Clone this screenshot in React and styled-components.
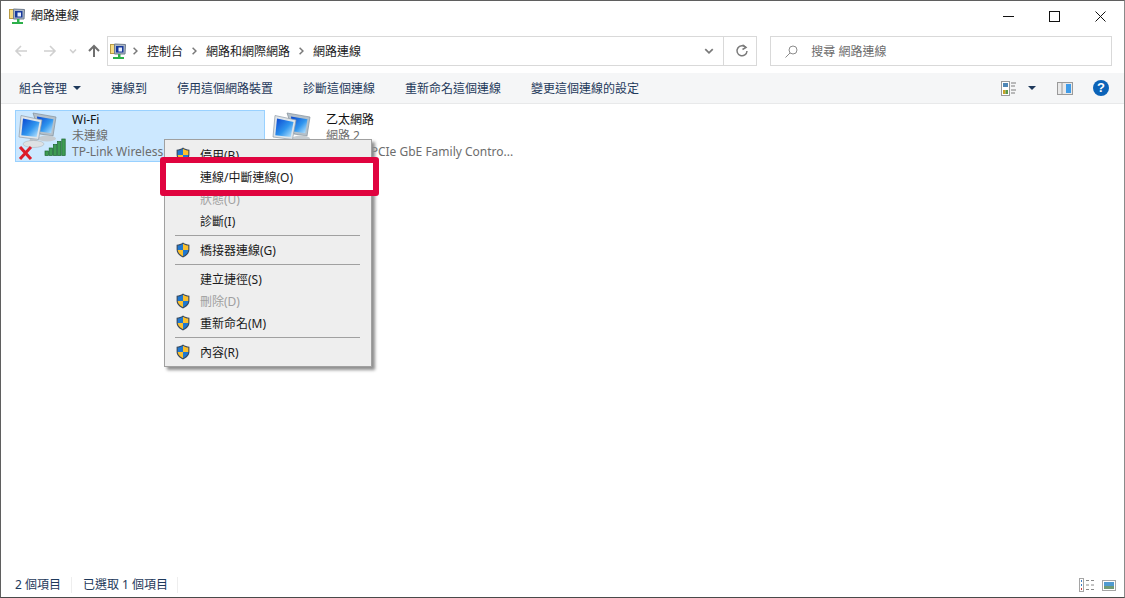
import React from "react";
import styled, { createGlobalStyle } from "styled-components";

const GlobalStyle = createGlobalStyle`
  html, body {
    margin: 0;
    padding: 0;
    background: #fff;
    overflow: hidden;
  }
  * {
    box-sizing: border-box;
  }
`;

const Window = styled.div`
  width: 1125px;
  height: 598px;
  display: flex;
  flex-direction: column;
  background: #fff;
  border: 1px solid #5f5f5f;
  border-right-color: #8a8a8a;
  border-bottom-color: #4a4a4a;
  font-family: "Noto Sans", "Noto Sans CJK TC", sans-serif;
  font-size: 12px;
  color: #1a1a1a;
`;

const TitleBar = styled.div`
  height: 30px;
  display: flex;
  align-items: center;
  padding-left: 8px;
  gap: 5px;
  flex-shrink: 0;
`;

const TitleText = styled.span`
  flex: 1;
  line-height: 16px;
`;

const WinControls = styled.div`
  display: flex;
  align-items: center;
  height: 30px;
  padding-right: 1px;
`;

const WinButton = styled.div`
  width: 46px;
  height: 30px;
  display: flex;
  align-items: center;
  justify-content: center;
`;

const NavRow = styled.div`
  height: 42px;
  display: flex;
  align-items: flex-start;
  padding: 5px 12px 0 0;
  flex-shrink: 0;
`;

const NavArrows = styled.div`
  width: 106px;
  height: 30px;
  padding-left: 13px;
  display: flex;
  align-items: center;
`;

const NavSlot = styled.div`
  width: ${(p) => p.$w}px;
  display: flex;
  align-items: center;
`;

const AddressBox = styled.div`
  width: 651px;
  height: 30px;
  display: flex;
  align-items: center;
  border: 1px solid #d9d9d9;
  padding-left: 2px;
`;

const Crumbs = styled.div`
  flex: 1;
  display: flex;
  align-items: center;
  gap: 9px;
  color: #1a1a1a;
`;

const CrumbIcon = styled.div`
  display: flex;
  margin-right: -3px;
`;

const AddressBtn = styled.div`
  width: ${(p) => p.$w}px;
  height: 28px;
  padding-left: ${(p) => p.$pl || 0}px;
  display: flex;
  align-items: center;
  justify-content: center;
  border-left: ${(p) => (p.$divided ? "1px solid #d9d9d9" : "none")};
`;

const SearchBox = styled.div`
  width: 342px;
  height: 30px;
  margin-left: 13px;
  border: 1px solid #d9d9d9;
  display: flex;
  align-items: center;
  padding-left: 14px;
  gap: 13px;
  color: #6d6d6d;
`;

const Toolbar = styled.div`
  height: 31px;
  background: #f5f6f7;
  border-bottom: 1px solid #e8e9ea;
  display: flex;
  align-items: center;
  padding-left: 18px;
  gap: 30px;
  color: #1e395b;
  flex-shrink: 0;
`;

const ToolItem = styled.div`
  display: flex;
  align-items: center;
  gap: 6px;
  white-space: nowrap;
`;

const ToolRight = styled.div`
  margin-left: auto;
  display: flex;
  align-items: center;
  padding-right: 15px;
`;

const ToolIcon = styled.div`
  display: flex;
  align-items: center;
  margin-left: ${(p) => p.$ml || 0}px;
`;

const Caret = styled.span`
  width: 0;
  height: 0;
  border-left: 4px solid transparent;
  border-right: 4px solid transparent;
  border-top: 4px solid #1e395b;
`;

const HelpBadge = styled.div`
  width: 16px;
  height: 16px;
  border-radius: 50%;
  background: #0b63b8;
  color: #fff;
  font: bold 13px/16px "Liberation Sans", sans-serif;
  text-align: center;
`;

const Content = styled.div`
  position: relative;
  flex: 1;
  display: flex;
  align-items: flex-start;
  gap: 4px;
  padding: 6px 0 0 14px;
`;

const Tile = styled.div`
  width: 250px;
  height: 52px;
  display: flex;
  align-items: center;
  gap: 5px;
  padding-left: 1px;
  border: 1px solid ${(p) => (p.$selected ? "#99d1ff" : "transparent")};
  background: ${(p) => (p.$selected ? "#cce8ff" : "transparent")};
`;

const TileText = styled.div`
  display: flex;
  flex-direction: column;
  min-width: 0;
  line-height: 16px;
  white-space: nowrap;
`;

const TileName = styled.div`
  color: #111;
`;

const TileSub = styled.div`
  color: #6d6d6d;
`;

const Menu = styled.div`
  position: absolute;
  left: 163px;
  top: 35px;
  width: 208px;
  padding: 4px 0 3px;
  background: #eeeeee;
  border: 1px solid #a0a0a0;
  box-shadow: 3px 3px 3px #8f8f8f;
  z-index: 5;
`;

const MenuItem = styled.div`
  position: relative;
  height: 22px;
  display: flex;
  align-items: center;
  color: ${(p) => (p.$disabled ? "#a0a0a0" : "#1a1a1a")};
  z-index: ${(p) => (p.$marked ? 1 : "auto")};

  ${(p) =>
    p.$marked &&
    `
    &::before {
      content: "";
      position: absolute;
      left: -5px;
      right: -8px;
      top: -9px;
      bottom: -8px;
      background: #fff;
      border: 6px solid #e0043f;
      border-radius: 3px;
      z-index: -1;
    }
  `}
`;

const MenuIcon = styled.div`
  width: 35px;
  padding-left: 10px;
  display: flex;
  align-items: center;
  flex-shrink: 0;
`;

const MenuSep = styled.div`
  height: 1px;
  margin: 3px 11px 3px 10px;
  background: #a0a0a0;
`;

const StatusBar = styled.div`
  height: 25px;
  display: flex;
  align-items: center;
  color: #1e395b;
  flex-shrink: 0;
  padding: 1px 8px 0 0;
`;

const StatusCell = styled.div`
  width: ${(p) => p.$w}px;
  padding-left: ${(p) => p.$pl}px;
  border-right: 1px solid #eeeeee;
  line-height: 16px;
  white-space: nowrap;
`;

const StatusIcons = styled.div`
  margin-left: auto;
  display: flex;
  align-items: center;
  gap: 7px;
`;

const Shield = () => (
  <svg width="16" height="16" viewBox="0 0 16 16">
    <path d="M8 .6C6 2 4 2.6 1.6 2.7v5c0 3.4 2.6 6 6.4 7.7 3.8-1.7 6.4-4.3 6.4-7.7v-5C12 2.6 10 2 8 .6z" fill="#3b4a5c" />
    <path d="M8 1.800C6.300 3 4.600 3.500 2.700 3.600V8H8z" fill="#1f78d1" />
    <path d="M8 1.800c1.700 1.200 3.400 1.700 5.300 1.800V8H8z" fill="#fbc02d" />
    <path d="M2.700 8c.2 2.700 2.400 4.900 5.300 6.200V8z" fill="#fbc02d" />
    <path d="M13.300 8c-.2 2.700-2.400 4.900-5.300 6.200V8z" fill="#1f78d1" />
  </svg>
);

const MiniNet = () => (
  <svg width="17" height="17" viewBox="0 0 17 17">
    <rect x="0.5" y="1.500" width="7" height="9" fill="#f7dc83" stroke="#b89b45" />
    <path d="M4.500 1l11 .5-.5 9.500H4.500z" fill="#aab6c6" stroke="#707d8e" />
    <rect x="6" y="3" width="7.500" height="6.500" fill="#17399c" />
    <rect x="8.500" y="4.500" width="3.500" height="4" fill="#e7eef9" />
    <rect x="8" y="11" width="2.500" height="3" fill="#2cb04a" />
    <rect x="3" y="14" width="11" height="2" fill="#2cb04a" />
  </svg>
);

const NetIcon = ({ id, offline }) => (
  <svg width="50" height="50" viewBox="0 0 50 50" style={{ flexShrink: 0 }}>
    <defs>
      <linearGradient id={id} x1="0" y1="0" x2="1" y2="1">
        <stop offset="0" stopColor="#0a45cf" />
        <stop offset="0.55" stopColor="#2f95ee" />
        <stop offset="1" stopColor="#c8ecff" />
      </linearGradient>
    </defs>
    <path d="M16 2l23 4-3 19-13-2z" fill="#b4c0ca" stroke="#84909b" strokeWidth=".7" />
    <path d="M20 5.500l16.500 2.800-2.300 14-13-2z" fill={`url(#${id})`} />
    <ellipse cx="30" cy="27.500" rx="9" ry="3" fill="#c6ccd1" />
    <path d="M4 4.500l21 4.500-3.500 19.500L2 26z" fill="#dfe5ea" stroke="#8f9ba6" strokeWidth=".7" />
    <path d="M6 7.500l16.500 3.500-2.800 15L4.300 24.200z" fill={`url(#${id})`} />
    <path d="M13 28h7l1 3h-9z" fill="#b9c0c6" />
    <ellipse cx="16.500" cy="33" rx="10.500" ry="3.500" fill="#dde1e4" stroke="#a5adb3" strokeWidth=".5" />
    {offline && (
      <>
        <g fill="#3e9c52" stroke="#1c6630" strokeWidth=".7">
          <rect x="28" y="40" width="3.400" height="4.500" />
          <rect x="32.200" y="37" width="3.400" height="7.500" />
          <rect x="36.400" y="33.500" width="3.400" height="11" />
          <rect x="40.600" y="30.500" width="3.400" height="14" />
          <rect x="44.800" y="28" width="3.400" height="16.500" />
        </g>
        <path d="M4 37l9 10M13 37l-9 10" stroke="#dc1c2a" strokeWidth="3" strokeLinecap="square" />
      </>
    )}
  </svg>
);

const Arrow = ({ dir, color }) => (
  <svg width="14" height="14" viewBox="0 0 14 14" fill="none" stroke={color} strokeWidth="1.600">
    {dir === "left" && <path d="M13 7H2M7 2L2 7l5 5" />}
    {dir === "right" && <path d="M1 7h11M7 2l5 5-5 5" />}
    {dir === "up" && <path d="M7 13V2M2 7l5-5 5 5" strokeWidth="2" />}
  </svg>
);

const Chevron = ({ size = 8, color = "#7a7a7a", width = 1.6 }) => (
  <svg width={size} height={size} viewBox="0 0 8 8" fill="none" stroke={color} strokeWidth={width}>
    <path d="M1 2.500l3 3 3-3" />
  </svg>
);

const CrumbSep = () => (
  <svg width="5" height="8" viewBox="0 0 5 8" fill="none" stroke="#7a7a7a" strokeWidth="1.500">
    <path d="M.6.800L3.900 4 .6 7.200" />
  </svg>
);

const menuRows = [
  { label: "停用(B)", shield: true },
  { label: "連線/中斷連線(O)", marked: true },
  { label: "狀態(U)", disabled: true },
  { label: "診斷(I)", sepAfter: true },
  { label: "橋接器連線(G)", shield: true, sepAfter: true },
  { label: "建立捷徑(S)" },
  { label: "刪除(D)", shield: true, disabled: true },
  { label: "重新命名(M)", shield: true, sepAfter: true },
  { label: "內容(R)", shield: true },
];

const tools = ["連線到", "停用這個網路裝置", "診斷這個連線", "重新命名這個連線", "變更這個連線的設定"];

export default function App() {
  return (
    <>
      <GlobalStyle />
      <Window>
        <TitleBar>
          <MiniNet />
          <TitleText>網路連線</TitleText>
          <WinControls>
            <WinButton>
              <svg width="11" height="11" viewBox="0 0 11 11" stroke="#111">
                <path d="M0 5.500h11" />
              </svg>
            </WinButton>
            <WinButton>
              <svg width="11" height="11" viewBox="0 0 11 11" stroke="#111" fill="none">
                <rect x=".5" y=".5" width="10" height="10" />
              </svg>
            </WinButton>
            <WinButton>
              <svg width="11" height="11" viewBox="0 0 11 11" stroke="#111">
                <path d="M.5.500l10 10M10.500.500l-10 10" />
              </svg>
            </WinButton>
          </WinControls>
        </TitleBar>

        <NavRow>
          <NavArrows>
            <NavSlot $w={29}>
              <Arrow dir="left" color="#d0d0d0" />
            </NavSlot>
            <NavSlot $w={26}>
              <Arrow dir="right" color="#d0d0d0" />
            </NavSlot>
            <NavSlot $w={18}>
              <Chevron color="#d0d0d0" />
            </NavSlot>
            <NavSlot $w={14}>
              <Arrow dir="up" color="#6f6f6f" />
            </NavSlot>
          </NavArrows>
          <AddressBox>
            <Crumbs>
              <CrumbIcon>
                <MiniNet />
              </CrumbIcon>
              <CrumbSep />
              <span>控制台</span>
              <CrumbSep />
              <span>網路和網際網路</span>
              <CrumbSep />
              <span>網路連線</span>
            </Crumbs>
            <AddressBtn $w={32} $pl={4}>
              <Chevron size={10} width={1.4} />
            </AddressBtn>
            <AddressBtn $w={33} $pl={3} $divided>
              <svg width="14" height="14" viewBox="0 0 14 14" fill="none" stroke="#7a7a7a" strokeWidth="1.500">
                <path d="M10.800 3.500A5 5 0 1 0 12 7" />
                <path d="M7.500.800l3.500 2.700-3.500 2" />
              </svg>
            </AddressBtn>
          </AddressBox>
          <SearchBox>
            <svg width="13" height="13" viewBox="0 0 13 13" fill="none" stroke="#8c8c8c">
              <circle cx="8" cy="5" r="4" />
              <path d="M5 8l-4.500 4.500" />
            </svg>
            <span>搜尋 網路連線</span>
          </SearchBox>
        </NavRow>

        <Toolbar>
          <ToolItem>
            組合管理
            <Caret />
          </ToolItem>
          {tools.map((t) => (
            <ToolItem key={t}>{t}</ToolItem>
          ))}
          <ToolRight>
            <ToolIcon>
              <svg width="16" height="15" viewBox="0 0 16 15">
                <rect x=".5" y=".5" width="8" height="14" fill="#fff" stroke="#9a9a9a" />
                <rect x="2" y="2" width="5" height="4" fill="#4f86b5" />
                <rect x="2" y="9" width="2.500" height="4" fill="#c9a227" />
                <rect x="4.500" y="9" width="2.500" height="4" fill="#5b9a4a" />
                <path d="M10 2h5M10 5h4M10 9h5M10 12h4" stroke="#7d7d7d" />
              </svg>
            </ToolIcon>
            <ToolIcon $ml={11}>
              <Caret />
            </ToolIcon>
            <ToolIcon $ml={21}>
              <svg width="16" height="13" viewBox="0 0 16 13">
                <rect x=".5" y=".5" width="15" height="12" fill="#e9e9e9" stroke="#9a9a9a" />
                <rect x="9" y="2" width="5" height="9" fill="#3f9be8" />
                <path d="M5 1v11" stroke="#9a9a9a" />
              </svg>
            </ToolIcon>
            <ToolIcon $ml={20}>
              <HelpBadge>?</HelpBadge>
            </ToolIcon>
          </ToolRight>
        </Toolbar>

        <Content>
          <Tile $selected>
            <NetIcon id="wifiScreen" offline />
            <TileText>
              <TileName>Wi-Fi</TileName>
              <TileSub>未連線</TileSub>
              <TileSub>TP-Link Wireless USB Adapter</TileSub>
            </TileText>
          </Tile>
          <Tile>
            <NetIcon id="lanScreen" />
            <TileText>
              <TileName>乙太網路</TileName>
              <TileSub>網路 2</TileSub>
              <TileSub>Realtek PCIe GbE Family Contro...</TileSub>
            </TileText>
          </Tile>

          <Menu>
            {menuRows.map((row) => (
              <React.Fragment key={row.label}>
                <MenuItem $disabled={row.disabled} $marked={row.marked}>
                  <MenuIcon>{row.shield && <Shield />}</MenuIcon>
                  {row.label}
                </MenuItem>
                {row.sepAfter && <MenuSep />}
              </React.Fragment>
            ))}
          </Menu>
        </Content>

        <StatusBar>
          <StatusCell $w={71} $pl={14}>
            2 個項目
          </StatusCell>
          <StatusCell $w={106} $pl={11}>
            已選取 1 個項目
          </StatusCell>
          <StatusIcons>
            <svg width="16" height="14" viewBox="0 0 16 14">
              <rect x=".5" y=".5" width="4" height="13" fill="#fff" stroke="#a5a5a5" />
              <rect x="2" y="2" width="1" height="2" fill="#3f7fc4" />
              <rect x="2" y="6" width="1" height="2" fill="#3f7fc4" />
              <rect x="2" y="10" width="1" height="2" fill="#c94040" />
              <path d="M7 2.500h3M12 2.500h3M7 7h3M12 7h3M7 11.500h3M12 11.500h3" stroke="#8a8a8a" />
            </svg>
            <svg width="14" height="11" viewBox="0 0 14 11">
              <rect x=".5" y=".5" width="13" height="10" fill="#fff" stroke="#a5a5a5" />
              <rect x="2" y="2" width="10" height="4" fill="#4f9ad0" />
              <rect x="2" y="6" width="10" height="3" fill="#6f9a76" />
            </svg>
          </StatusIcons>
        </StatusBar>
      </Window>
    </>
  );
}
